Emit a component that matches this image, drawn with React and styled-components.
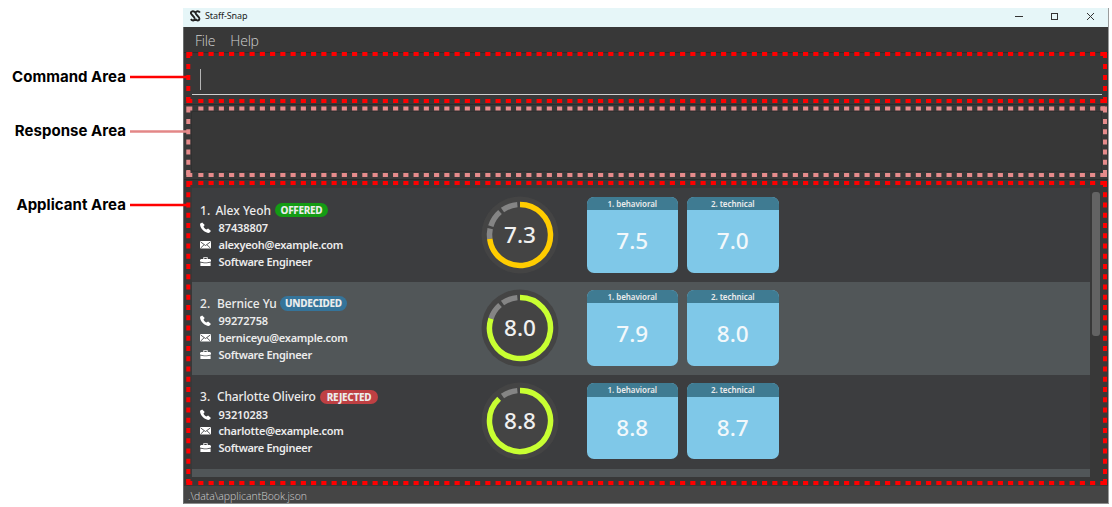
import React from "react";
import styled, { createGlobalStyle } from "styled-components";

const Global = createGlobalStyle`
  *{box-sizing:border-box}
  body{margin:0;background:#fff;overflow:hidden}
`;
const Page = styled.div`
  position:relative;width:1112px;height:507px;display:flex;padding-top:8px;
  font-family:"Noto Sans","Open Sans",sans-serif;
`;
const Legend = styled.div`
  width:183px;flex:none;display:flex;flex-direction:column;
  font-family:Inter,sans-serif;font-weight:700;font-size:15px;line-height:21px;color:#000;
`;
const LegendItem = styled.div`
  height:20px;width:126px;display:flex;justify-content:flex-end;white-space:nowrap;
  margin-top:${p => p.$gap}px;letter-spacing:${p => p.$ls || 0}px;
`;
const Window = styled.div`
  width:926px;height:496px;display:flex;flex-direction:column;background:#383838;
  border-left:1px solid #6b6e6e;border-right:1px solid #9a9c9c;border-bottom:1px solid #8b8b8b;
`;
const TitleBar = styled.div`
  height:19px;flex:none;margin:0 0 0 -1px;background:#e6f6f8;display:flex;align-items:center;padding:0 11px 3px 7px;
  font-size:9px;color:#1c1c1c;
`;
const TitleText = styled.span`margin-left:4px;flex:1;line-height:14px;letter-spacing:-.1px;`;
const Controls = styled.svg`width:84px;height:12px;flex:none;`;
const MenuBar = styled.div`
  height:25px;flex:none;display:flex;gap:15px;padding:5px 0 0 11px;
  font-family:"Open Sans",sans-serif;font-weight:300;font-size:14px;line-height:18px;color:#d0d0d0;
`;
const MenuItem = styled.span`letter-spacing:${p => p.$ls}px;`;
const CommandArea = styled.div`
  height:53px;flex:none;padding:8px 6px 0 8px;border-top:1px solid #2b2b2b;border-bottom:1px solid #2b2b2b;
`;
const CommandField = styled.div`
  height:34px;border-bottom:1px solid #cfcfcf;padding:8px 0 0 8px;
`;
const Caret = styled.div`width:1px;height:21px;background:#b4b4b4;`;
const ResponseArea = styled.div`
  height:75px;flex:none;padding:6px 6px 7px 7px;border-bottom:1px solid #2b2b2b;
`;
const ResponseBox = styled.div`height:100%;border:1px solid #303030;border-radius:2px;background:#373737;`;
const ApplicantArea = styled.div`height:306px;flex:none;display:flex;padding:8px 0 9px 8px;`;
const List = styled.div`width:898px;height:289px;overflow:hidden;padding-top:.7px;background:#3c3d3f;`;
const Scroll = styled.div`
  width:8px;height:144px;margin:4px 0 0 2px;border-radius:3px;background:#636363;
`;
const Row = styled.div`
  display:flex;height:93.3px;background:${p => (p.$alt ? "#515658" : "#3c3d3f")};
  padding-left:8px;color:#ececec;
`;
const Info = styled.div`width:282px;padding-top:12.5px;`;
const NameLine = styled.div`
  display:flex;align-items:center;height:18px;font-weight:500;font-size:12px;white-space:nowrap;
`;
const Index = styled.span`width:${p => p.$w}px;`;
const Name = styled.span`width:${p => p.$w}px;letter-spacing:${p => p.$ls}px;`;
const Badge = styled.span`
  margin-left:4px;width:${p => p.$w}px;height:14.5px;border-radius:8px;background:${p => p.$bg};
  font-weight:800;font-size:10px;line-height:14px;text-align:center;letter-spacing:-.3px;
`;
const Detail = styled.div`
  display:flex;align-items:center;height:16.8px;font-weight:600;font-size:11px;white-space:nowrap;
  letter-spacing:${p => p.$ls}px;
`;
const DetailIcon = styled.svg`width:11px;height:11px;margin-right:7.5px;fill:#fff;`;
const Gauge = styled.svg`width:78px;height:78px;margin:7px 27.5px 0 -1px;flex:none;`;
const Cards = styled.div`display:flex;gap:9px;padding-top:8px;`;
const Card = styled.div`
  width:91.5px;height:76px;border-radius:7px;overflow:hidden;background:#7fc8e8;
`;
const CardHead = styled.div`
  height:13.5px;background:#3f7b92;text-align:center;font-size:8px;line-height:13px;font-weight:600;letter-spacing:-.05px;
`;
const CardScore = styled.div`
  height:62px;line-height:62px;text-align:center;font-size:22.5px;font-weight:550;color:#f2f8fb;
`;
const StatusBar = styled.div`
  height:17px;flex:none;background:#454545;color:#d0d0d0;font-family:"Open Sans",sans-serif;font-size:10.5px;font-weight:300;
  line-height:20px;padding-left:4px;letter-spacing:-.03px;
`;
const Overlay = styled.svg`position:absolute;left:0;top:0;width:1112px;height:507px;pointer-events:none;`;

const icons = {
  phone: <path d="M2.200.4 0 1.800C-.1 6.400 4.300 10.900 9 11l2-2-2.900-2.500-1.700 1.100C5 6.800 4 5.700 3.500 4.400l1.200-1.300z" />,
  mail: <><rect x="0" y="2" width="11" height="7.500" rx=".8" /><path d="M.7 3 5.500 6.500 10.300 3M.7 9 4 5.800M10.300 9 7 5.800" fill="none" stroke="#444648" strokeWidth=".9" /></>,
  work: <><path d="M3.300 3V1.200h4.400V3H6.700v-.9H4.300V3zM1 3h9l1 1v1.600L7 6.600H4L0 5.600V4z" /><path d="M.4 6.500 4 7.300h3l3.600-.8V10H.4z" /></>,
};

function Item({ icon, ls = -0.1, children }) {
  return <Detail $ls={ls}><DetailIcon viewBox="0 0 11 11">{icons[icon]}</DetailIcon>{children}</Detail>;
}

const at = (deg, r = 30.5) => {
  const a = (deg * Math.PI) / 180;
  return `${39 + r * Math.sin(a)} ${39 - r * Math.cos(a)}`;
};
const arc = (a, b) => `M${at(a)}A30.5 30.5 0 ${b - a > 180 ? 1 : 0} 1 ${at(b)}`;

function ScoreGauge({ value, color }) {
  const end = value * 36;
  const segs = [[253, 282], [287, 319], [325, 355]].filter(s => s[1] > end + 3);
  return (
    <Gauge viewBox="0 0 78 78">
      <circle cx="39" cy="39" r="38.500" fill="#444" />
      {segs.map(([a, b]) => <path key={a} d={arc(Math.max(a, end), b)} fill="none" stroke="#858585" strokeWidth="5.500" />)}
      <path d={arc(0, end)} fill="none" stroke={color} strokeWidth="5.500" />
      <text x="39" y="46.500" textAnchor="middle" fontSize="22.500" fontWeight="550" fill="#f0f0f0">{value.toFixed(1)}</text>
    </Gauge>
  );
}

const people = [
  { n: 1, w: 15.5, nw: 55.5, ls: 0, name: "Alex Yeoh", status: "OFFERED", bw: 53, bg: "#149b14", phone: "87438807", mail: "alexyeoh@example.com", mls: -0.26, score: 7.3, color: "#ffcc00", b: "7.5", t: "7.0" },
  { n: 2, w: 17, nw: 59, ls: -0.1, name: "Bernice Yu", status: "UNDECIDED", bw: 67, bg: "#35749a", phone: "99272758", mail: "berniceyu@example.com", mls: -0.26, score: 8.0, color: "#c8ff32", b: "7.9", t: "8.0" },
  { n: 3, w: 17, nw: 99, ls: -0.15, name: "Charlotte Oliveiro", status: "REJECTED", bw: 58, bg: "#bf4043", phone: "93210283", mail: "charlotte@example.com", mls: -0.26, score: 8.8, color: "#c8ff32", b: "8.8", t: "8.7" },
];

function Frame({ top: t, bottom: b, color, first, step }) {
  const l = 188.3, r = 1105;
  return (
    <g stroke={color} strokeWidth="4" fill="none">
      <path d={`M198.300 ${t}H${r}M198.300 ${b}H${r}`} strokeDasharray="5.125 5.125" />
      <path d={`M${l} ${first}V${b}M${r} ${first}V${b}`} strokeDasharray={`5 ${step - 5}`} />
      <path d={`M${l} ${t + 4}V${t}H${l + 4}M${r - 4} ${t}H${r}V${t + 4}M${r} ${b - 4}V${b}H${r - 4}M${l + 4} ${b}H${l}V${b - 4}`} />
    </g>
  );
}

export default function App() {
  return (
    <Page>
      <Global />
      <Legend>
        <LegendItem $gap={58} $ls={0.04}>Command Area</LegendItem>
        <LegendItem $gap={34} $ls={0.04}>Response Area</LegendItem>
        <LegendItem $gap={54} $ls={0.04}>Applicant Area</LegendItem>
      </Legend>
      <Window>
        <TitleBar>
          <svg width="11" height="12" viewBox="0 0 11 12" fill="none" stroke="#222" strokeWidth="1.900">
            <path d="M5.300 2.500C3.500.4.300 1.300 1 3.500 1.500 5 5 7 4.700 9c-.4 2-2.500 2-3.900.2M10 2.500C8.200.4 5 1.300 5.700 3.500 6.200 5 9.700 7 9.400 9c-.4 2-2.500 2-3.900.2" />
          </svg>
          <TitleText>Staff-Snap</TitleText>
          <Controls viewBox="0 0 84 12" fill="none" stroke="#333" strokeWidth="1">
            <path d="M2 6.500h8" /><rect x="38.500" y="3.500" width="6" height="6" /><path d="m74 3 7 7m0-7-7 7" />
          </Controls>
        </TitleBar>
        <MenuBar><MenuItem $ls={-0.2}>File</MenuItem><MenuItem $ls={-0.2}>Help</MenuItem></MenuBar>
        <CommandArea><CommandField><Caret /></CommandField></CommandArea>
        <ResponseArea><ResponseBox /></ResponseArea>
        <ApplicantArea>
          <List>
            {people.map(p => (
              <Row key={p.n} $alt={p.n % 2 === 0}>
                <Info>
                  <NameLine><Index $w={p.w}>{p.n}.</Index><Name $w={p.nw} $ls={p.ls}>{p.name}</Name><Badge $w={p.bw} $bg={p.bg}>{p.status}</Badge></NameLine>
                  <Item icon="phone">{p.phone}</Item>
                  <Item icon="mail" ls={p.mls}>{p.mail}</Item>
                  <Item icon="work" ls={-0.31}>Software Engineer</Item>
                </Info>
                <ScoreGauge value={p.score} color={p.color} />
                <Cards>
                  <Card><CardHead>1. behavioral</CardHead><CardScore>{p.b}</CardScore></Card>
                  <Card><CardHead>2. technical</CardHead><CardScore>{p.t}</CardScore></Card>
                </Cards>
              </Row>
            ))}
            <Row $alt />
          </List>
          <Scroll />
        </ApplicantArea>
        <StatusBar>.\data\applicantBook.json</StatusBar>
      </Window>
      <Overlay viewBox="0 0 1112 507">
        <path d="M130 77h57M130 205h57" stroke="#f00" strokeWidth="2.500" />
        <path d="M130 131.500h57" stroke="#e38787" strokeWidth="2.500" />
        <Frame top={54} bottom={101} color="#f00" first={64} step={11} />
        <Frame top={108.500} bottom={175} color="#e68b8b" first={119} step={10.2} />
        <Frame top={183} bottom={483} color="#f00" first={192.200} step={10.250} />
      </Overlay>
    </Page>
  );
}
